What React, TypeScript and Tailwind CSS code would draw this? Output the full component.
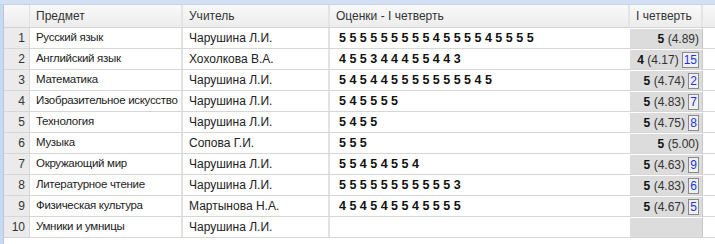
import React from "react";

type Row = {
  subject: string;
  teacher: string;
  marks: string;
  grade?: string;
  avg?: string;
  count?: string;
};

const rows: Row[] = [
  { subject: "Русский язык", teacher: "Чарушина Л.И.", marks: "5555555554555545555", grade: "5", avg: "(4.89)" },
  { subject: "Английский язык", teacher: "Хохолкова В.А.", marks: "455344455443", grade: "4", avg: "(4.17)", count: "15" },
  { subject: "Математика", teacher: "Чарушина Л.И.", marks: "545445555555545", grade: "5", avg: "(4.74)", count: "2" },
  { subject: "Изобразительное искусство", teacher: "Чарушина Л.И.", marks: "545555", grade: "5", avg: "(4.83)", count: "7" },
  { subject: "Технология", teacher: "Чарушина Л.И.", marks: "5455", grade: "5", avg: "(4.75)", count: "8" },
  { subject: "Музыка", teacher: "Сопова Г.И.", marks: "555", grade: "5", avg: "(5.00)" },
  { subject: "Окружающий мир", teacher: "Чарушина Л.И.", marks: "55454554", grade: "5", avg: "(4.63)", count: "9" },
  { subject: "Литературное чтение", teacher: "Чарушина Л.И.", marks: "555555555553", grade: "5", avg: "(4.83)", count: "6" },
  { subject: "Физическая культура", teacher: "Мартынова Н.А.", marks: "454545545555", grade: "5", avg: "(4.67)", count: "5" },
  { subject: "Умники и умницы", teacher: "Чарушина Л.И.", marks: "" },
];

const App = () => {
  return (
    <div className="w-[715px] h-[244px] bg-white overflow-hidden text-[12px] text-[#222] font-['Liberation_Sans',Arial,sans-serif]">
      <div className="h-[5px] bg-[#d3e0f3] border-b border-[#c3d3ea]" />
      <div className="flex">
        <div className="w-[4px] bg-[#c9d9f0] border-r border-[#b3c8e6] h-[239px]" />
        <div className="flex-1">
          {/* header */}
          <div className="flex h-[23px] bg-gradient-to-b from-[#f9f9f9] to-[#ececec] border-b border-[#d4d4d4] text-[#333]">
            <div className="w-[26px] border-r border-[#e0e0e0]" />
            <div className="w-[153px] pl-[6px] flex items-center border-r-2 border-[#e4e4e4]">Предмет</div>
            <div className="w-[147px] pl-[6px] flex items-center border-r-2 border-[#e4e4e4]">Учитель</div>
            <div className="w-[300px] pl-[6px] flex items-center border-r-2 border-[#e4e4e4]">Оценки - I четверть</div>
            <div className="w-[73px] pl-[6px] flex items-center border-r-2 border-[#e4e4e4]">I четверть</div>
            <div className="flex-1" />
          </div>
          {rows.map((r, i) => (
            <div key={i} className="flex h-[21px] border-b border-[#d6d6d6]">
              <div className="w-[26px] bg-[#ebebeb] border-r border-[#d8d8d8] flex items-center justify-end pr-[4px] text-[#333]">
                {i + 1}
              </div>
              <div className="w-[153px] pl-[6px] flex items-center border-r-2 border-[#e2e2e2] whitespace-nowrap overflow-hidden text-[11.5px] tracking-[-0.3px]">
                {r.subject}
              </div>
              <div className="w-[147px] pl-[6px] flex items-center border-r-2 border-[#e2e2e2] whitespace-nowrap">
                {r.teacher}
              </div>
              <div className="w-[300px] pl-[9px] flex items-center font-bold text-[12.5px] whitespace-nowrap text-[#111]">
                {r.marks.split("").join(" ")}
              </div>
              <div className="w-[73px] bg-[#dcdcdc] border-r border-[#c8c8c8] border-t border-t-white flex items-center justify-end pr-[3px] gap-[3px] whitespace-nowrap">
                {r.grade && (
                  <span>
                    <b className="text-[#111]">{r.grade}</b> <span className="text-[#333]">{r.avg}</span>
                  </span>
                )}
                {r.count && (
                  <span className="h-[16px] px-[1px] min-w-[11px] flex items-center justify-center border border-[#8a8a8a] bg-[#f0f0f0] text-[#2233dd]">
                    {r.count}
                  </span>
                )}
              </div>
              <div className="flex-1" />
            </div>
          ))}
        </div>
      </div>
    </div>
  );
};

export default App;
